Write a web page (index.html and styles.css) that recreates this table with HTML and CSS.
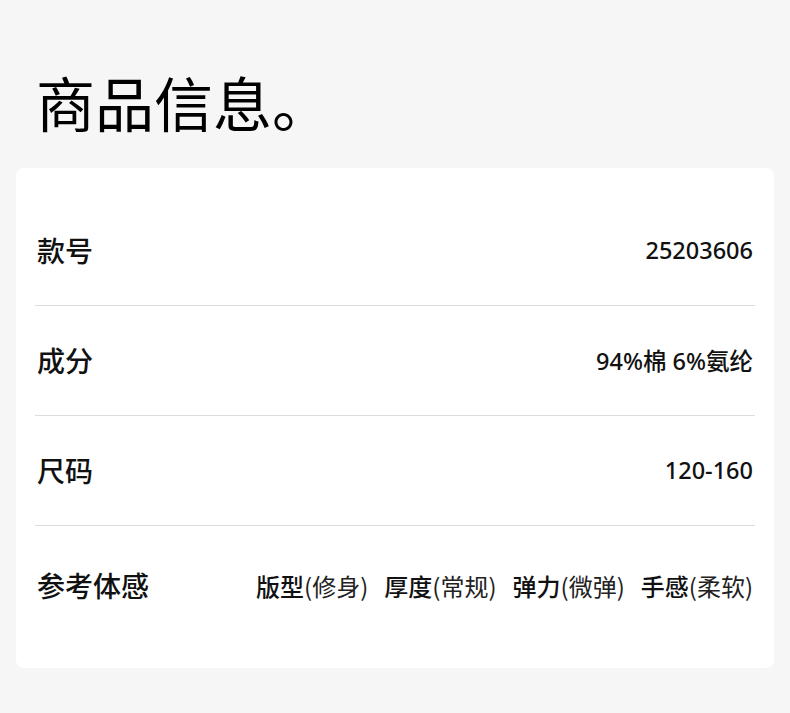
FILE: index.html
```html
<!DOCTYPE html>
<html lang="zh">
<head>
<meta charset="utf-8">
<link rel="stylesheet" href="styles.css">
</head>
<body>
<div class="page">
  <h1 class="title">商品信息。</h1>
  <div class="card">
    <div class="row">
      <div class="label">款号</div>
      <div class="value">25203606</div>
    </div>
    <div class="row">
      <div class="label">成分</div>
      <div class="value">94%棉 6%氨纶</div>
    </div>
    <div class="row">
      <div class="label">尺码</div>
      <div class="value">120-160</div>
    </div>
    <div class="row last">
      <div class="label">参考体感</div>
      <div class="feels">
        <span class="feel"><b>版型</b>(修身)</span>
        <span class="feel"><b>厚度</b>(常规)</span>
        <span class="feel"><b>弹力</b>(微弹)</span>
        <span class="feel"><b>手感</b>(柔软)</span>
      </div>
    </div>
  </div>
</div>
</body>
</html>
```
FILE: styles.css
```css
html, body {
  margin: 0;
  padding: 0;
  background: #f6f6f6;
}
body {
  font-family: "Noto Sans", "Noto Sans CJK SC", sans-serif;
  color: #111;
}
.page {
  width: 790px;
  height: 713px;
  padding: 0 16px;
  box-sizing: border-box;
}
.title {
  margin: 0;
  padding: 60px 0 0 20px;
  font-family: "Noto Sans CJK SC", sans-serif;
  font-size: 59px;
  font-weight: 400;
  line-height: 84px;
  color: #000;
}
.card {
  margin-top: 24px;
  background: #fff;
  border-radius: 8px;
  height: 500px;
  padding: 28px 19px 0;
  box-sizing: border-box;
}
.row {
  height: 110px;
  display: flex;
  align-items: center;
  justify-content: space-between;
  border-bottom: 1px solid #dcdcdc;
  padding: 0 2px 2px 2px;
  box-sizing: border-box;
}
.row.last {
  border-bottom: none;
  padding-top: 10px;
}
.label {
  font-family: "Noto Sans CJK SC", sans-serif;
  font-size: 28px;
  font-weight: 500;
  color: #111;
}
.value {
  font-family: "Noto Sans", "Noto Sans CJK SC", sans-serif;
  font-size: 23.5px;
  font-weight: 500;
  color: #111;
}
.feels {
  display: flex;
  gap: 16px;
  font-family: "Noto Sans CJK SC", sans-serif;
  font-size: 24px;
  color: #222;
}
.feel b {
  font-weight: 500;
  color: #111;
}
```
